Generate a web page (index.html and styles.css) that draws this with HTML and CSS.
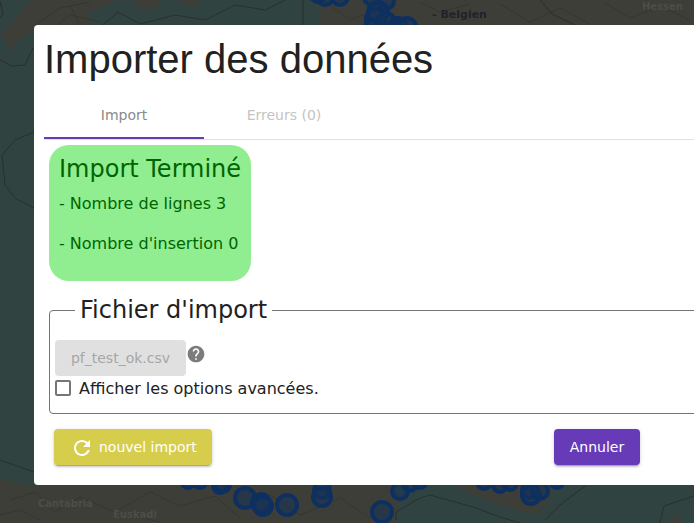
FILE: index.html
```html
<!DOCTYPE html>
<html lang="fr">
<head>
<meta charset="utf-8">
<title>Importer des données</title>
<link rel="stylesheet" href="styles.css">
</head>
<body>
<svg class="map" viewBox="0 0 694 523" width="694" height="523" aria-hidden="true">
  <rect width="694" height="523" fill="#314341"/>
  <path class="land" d="M319 0H694V30H319Z"/>
  <path class="land" d="M32 0H118L100 7L90 12L88 30H34L16 42L11 52L5 40L0 33L8 28L18 15Z"/>
  <path class="land" d="M132 0H160L157 8L140 9ZM177 0H200L192 8L186 5Z"/>
  <path class="land" d="M0 478L12 482L34 486H392L400 497L397 510L396 523H0Z"/>
  <path class="land" d="M458 484H554L552 492L546 505L535 514L520 511L500 505L480 497L462 490Z"/>
  <path class="land" d="M672 523L674 516L678 513L681 523Z"/>
  <path class="detail" d="M35 25L60 8L90 2M50 30L70 15L100 22M70 5L80 26M330 5L350 20L380 8M420 2L440 12L470 4M500 4L530 22L560 8L590 24M605 3L630 18L660 6L690 20M10 500L35 492L55 512L80 497L115 512L150 492L180 506L215 496L240 518M270 495L300 515L340 498L370 518M0 515L20 510L40 520M130 515L160 522"/>
  <path class="border" d="M103 25L118 12L140 24L175 15L205 20L235 5L265 10L285 0M303 0V25M0 60L12 66L25 65L33 48M34 132L15 140L2 155L5 185L15 198L34 208M0 460L34 472M396 520V512L420 498L430 495L473 507L500 517L520 523M585 486L560 505L545 520M694 496L664 506L660 523M540 0L552 14L575 25M0 1L3 14L0 18"/>
  <g class="ring">
    <circle cx="325" cy="-3" r="8"/><circle cx="340" cy="-3" r="8"/><circle cx="318" cy="-5" r="7"/>
    <circle cx="372" cy="-3" r="8"/><circle cx="386" cy="1" r="8"/><circle cx="378" cy="12" r="10"/><circle cx="376" cy="19" r="10"/><circle cx="386" cy="22" r="9"/><circle cx="372" cy="27" r="7"/><circle cx="398" cy="27" r="9"/><circle cx="407" cy="27" r="9"/>
    <circle cx="188" cy="481" r="7"/><circle cx="200" cy="481" r="7"/><circle cx="220" cy="486" r="7"/><circle cx="223" cy="485" r="7"/>
    <circle cx="245" cy="498" r="10"/><circle cx="261" cy="503" r="9"/><circle cx="263" cy="506" r="9"/><circle cx="287" cy="505" r="10"/>
    <circle cx="322" cy="490" r="8"/><circle cx="322" cy="497" r="9"/><circle cx="382" cy="512" r="10"/>
    <circle cx="400" cy="491" r="8"/><circle cx="410" cy="484" r="7"/><circle cx="420" cy="481" r="7"/>
    <circle cx="484" cy="482" r="7"/><circle cx="500" cy="485" r="7"/><circle cx="510" cy="483" r="7"/><circle cx="530" cy="490" r="8"/><circle cx="531" cy="495" r="9"/><circle cx="540" cy="491" r="8"/><circle cx="557" cy="481" r="7"/>
  </g>
  <text class="lbl strong" x="432" y="18">- Belgien</text>
  <text class="lbl faint" x="642" y="10">Hessen</text>
  <text class="lbl faint" x="38" y="507">Cantabria</text>
  <text class="lbl faint" x="113" y="518">Euskadi</text>
</svg>

<div class="dialog" role="dialog">
  <h1 class="title">Importer des données</h1>
  <div class="tabs">
    <div class="tab tab-active">Import</div>
    <div class="tab tab-off">Erreurs (0)</div>
  </div>
  <div class="result">
    <h2 class="result-title">Import Terminé</h2>
    <p class="result-line">- Nombre de lignes 3</p>
    <p class="result-line">- Nombre d'insertion 0</p>
  </div>
  <fieldset class="box">
    <legend class="box-legend">Fichier d'import</legend>
    <div class="file-row">
      <span class="file-btn">pf_test_ok.csv</span>
      <svg class="help" viewBox="0 0 24 24" width="20" height="20" aria-hidden="true"><path fill="#7c7c7c" d="M12 2C6.48 2 2 6.48 2 12s4.48 10 10 10 10-4.48 10-10S17.52 2 12 2zm1 17h-2v-2h2v2zm2.07-7.75l-.9.92C13.45 12.9 13 13.5 13 15h-2v-.5c0-1.1.45-2.1 1.17-2.83l1.24-1.26c.37-.36.59-.86.59-1.41 0-1.1-.9-2-2-2s-2 .9-2 2H8c0-2.21 1.79-4 4-4s4 1.79 4 4c0 .88-.36 1.68-.93 2.25z"/></svg>
    </div>
    <label class="check-row">
      <span class="check"></span>
      <span>Afficher les options avancées.</span>
    </label>
  </fieldset>
  <div class="actions">
    <button class="btn btn-yellow" type="button">
      <svg class="btn-icon" viewBox="0 0 24 24" width="24" height="24" aria-hidden="true"><path fill="#fff" d="M17.65 6.35C16.2 4.9 14.21 4 12 4c-4.42 0-7.99 3.58-7.99 8s3.57 8 7.99 8c3.73 0 6.84-2.55 7.73-6h-2.08c-.82 2.33-3.04 4-5.65 4-3.31 0-6-2.69-6-6s2.69-6 6-6c1.66 0 3.14.69 4.22 1.78L13 11h7V4l-2.35 2.35z"/></svg>
      <span>nouvel import</span>
    </button>
    <button class="btn btn-purple" type="button">Annuler</button>
  </div>
</div>
</body>
</html>
```

FILE: styles.css
```css
html, body {
  margin: 0;
  padding: 0;
  width: 694px;
  height: 523px;
  overflow: hidden;
  background: #314341;
  font-family: "DejaVu Sans", sans-serif;
}

.map {
  position: absolute;
  left: 0;
  top: 0;
  display: block;
}

.land { fill: #3d3e38; }
.detail { fill: none; stroke: #343632; stroke-width: 1; }
.border { fill: none; stroke: #292f2e; stroke-width: 1; }
.ring { fill: rgba(22, 50, 90, 0.55); stroke: #0e3061; stroke-width: 4; }
.lbl { font-family: "DejaVu Sans", sans-serif; font-size: 11px; }
.strong { fill: #22222a; font-weight: 700; }
.faint { fill: #4c4d48; font-size: 10px; font-weight: 700; }

.dialog {
  position: absolute;
  left: 34px;
  top: 25px;
  width: 690px;
  height: 460px;
  box-sizing: border-box;
  padding: 10px;
  background: #fff;
  border-radius: 4px;
  color: #212121;
}

.title {
  margin: 0;
  height: 48px;
  font-family: "Liberation Sans", Arial, sans-serif;
  font-size: 40px;
  line-height: 48px;
  font-weight: 400;
  color: #212121;
}

.tabs {
  display: flex;
  height: 48px;
  margin-top: 8px;
  border-bottom: 1px solid #e0e0e0;
  font-size: 14px;
}

.tab {
  width: 160px;
  height: 48px;
  box-sizing: border-box;
  padding-top: 2px;
  display: flex;
  align-items: center;
  justify-content: center;
  color: #8a8a8a;
}

.tab-active { border-bottom: 2px solid #673ab7; }
.tab-off { color: #c4c4c4; padding-bottom: 2px; }

.result {
  box-sizing: border-box;
  width: 202px;
  height: 136px;
  margin: 5px 0 0 5px;
  padding: 10px;
  background: #90ee90;
  border-radius: 20px;
  color: #006400;
}

.result-title {
  margin: 0;
  font-size: 24px;
  line-height: 29px;
  font-weight: 400;
  white-space: nowrap;
}

.result-line {
  margin: 10px 0 0;
  font-size: 16px;
  line-height: 19px;
}

.result-line + .result-line { margin-top: 21px; }

.box {
  box-sizing: border-box;
  width: 660px;
  height: 118px;
  margin: 15px 0 0 5px;
  padding: 0 5px;
  border: 1px solid #757575;
  border-radius: 4px;
}

.box-legend {
  margin: 0 0 -2px 20px;
  padding: 0 5px;
  font-size: 24px;
  line-height: 29px;
  color: #212121;
}

.file-row {
  display: flex;
  align-items: flex-start;
  height: 36px;
  margin-top: 17px;
}

.file-btn {
  box-sizing: border-box;
  width: 131px;
  height: 36px;
  display: flex;
  align-items: center;
  justify-content: center;
  background: #e0e0e0;
  border-radius: 4px;
  font-size: 14px;
  color: #a6a6a6;
}

.help { margin: 4px 0 0 0; display: block; }

.check-row {
  display: flex;
  align-items: center;
  gap: 8px;
  height: 24px;
  font-size: 16px;
  color: #212121;
}

.check {
  box-sizing: border-box;
  width: 16px;
  height: 16px;
  border: 2px solid #757575;
  border-radius: 2px;
}

.actions {
  display: flex;
  justify-content: space-between;
  width: 586px;
  margin: 15px 0 0 10px;
}

.btn {
  height: 36px;
  border: 0;
  border-radius: 4px;
  font-family: "DejaVu Sans", sans-serif;
  font-size: 14px;
  color: #fff;
  display: flex;
  align-items: center;
  box-shadow: 0 3px 1px -2px rgba(0,0,0,.2), 0 2px 2px 0 rgba(0,0,0,.14), 0 1px 5px 0 rgba(0,0,0,.12);
}

.btn-yellow {
  width: 158px;
  padding: 0 0 0 16px;
  gap: 5px;
  background: #d7cd4c;
}

.btn-purple {
  width: 86px;
  justify-content: center;
  padding: 0;
  background: #673ab7;
}

.btn-icon { display: block; position: relative; top: 1px; }
```
